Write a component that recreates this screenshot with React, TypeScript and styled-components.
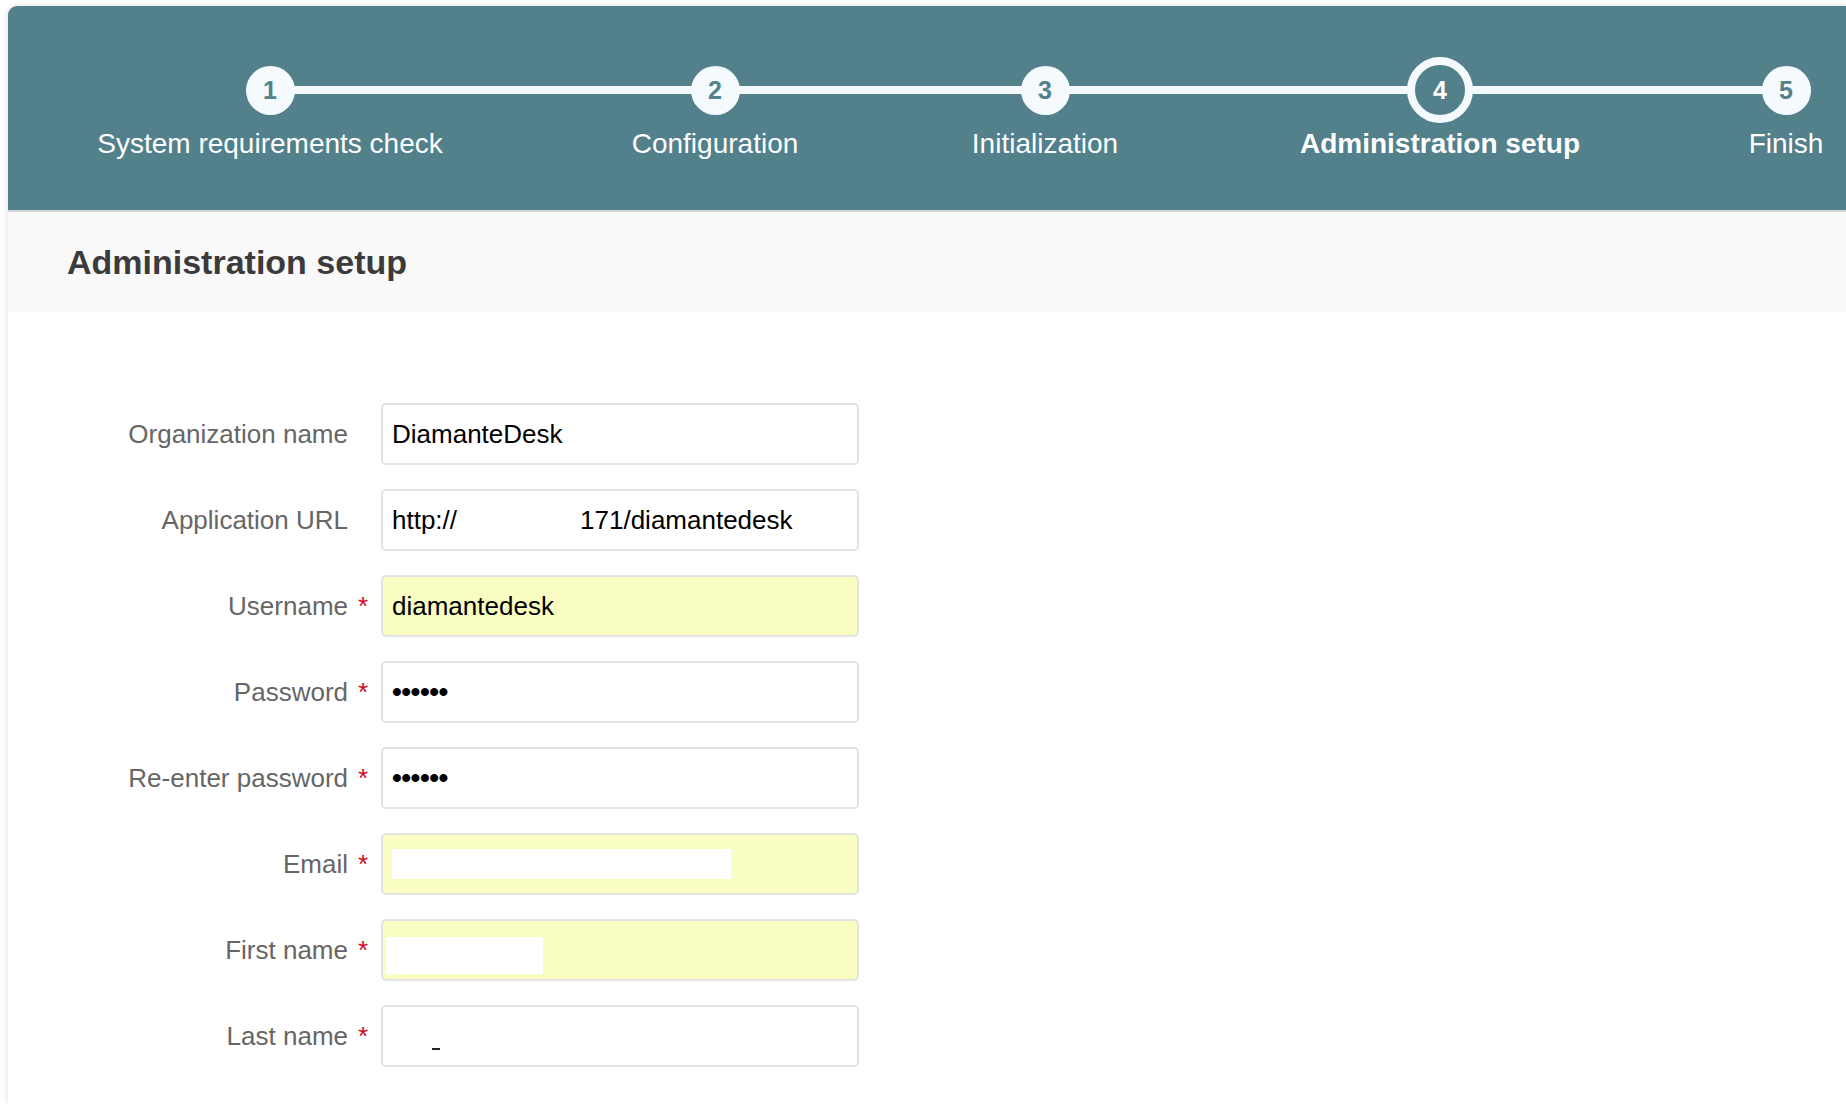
import styled, { createGlobalStyle } from 'styled-components';

const GlobalStyle = createGlobalStyle`
  html, body {
    margin: 0;
    padding: 0;
    background: #fff;
    overflow: hidden;
    font-family: "Liberation Sans", Arial, Helvetica, sans-serif;
  }
`;

const TEAL = '#52808b';
const LIGHT = '#f5faff';

const STEPS = [
  { n: 1, label: 'System requirements check', width: 524 },
  { n: 2, label: 'Configuration', width: 366 },
  { n: 3, label: 'Initialization', width: 294 },
  { n: 4, label: 'Administration setup', width: 496 },
  { n: 5, label: 'Finish', width: 196 },
];
const ACTIVE = 4;

const App = () => {
  return (
    <Page>
      <GlobalStyle />
      <Panel>
        <Header>
          <Steps $cols={STEPS.map((s) => `${s.width}px`).join(' ')}>
            {STEPS.map((s) => (
              <Step key={s.n}>
                <DotArea>
                  <Dot $active={s.n === ACTIVE}>{s.n}</Dot>
                </DotArea>
                <StepLabel $active={s.n === ACTIVE}>{s.label}</StepLabel>
              </Step>
            ))}
          </Steps>
        </Header>

        <TitleBar>
          <h1>Administration setup</h1>
        </TitleBar>

        <Form>
          <Label>Organization name</Label>
          <Star />
          <Field>DiamanteDesk</Field>

          <Label>Application URL</Label>
          <Star />
          <Field>
            <span>http://</span>
            <UrlRest>171/diamantedesk</UrlRest>
          </Field>

          <Label>Username</Label>
          <Star>*</Star>
          <Field $autofill>diamantedesk</Field>

          <Label>Password</Label>
          <Star>*</Star>
          <Field>
            <Dots>••••••</Dots>
          </Field>

          <Label>Re-enter password</Label>
          <Star>*</Star>
          <Field>
            <Dots>••••••</Dots>
          </Field>

          <Label>Email</Label>
          <Star>*</Star>
          <Field $autofill>
            <Mask $w={339} $h={30} />
          </Field>

          <Label>First name</Label>
          <Star>*</Star>
          <Field $autofill>
            <Mask $w={157} $h={37} $left={-6} $shift={10} />
          </Field>

          <Label>Last name</Label>
          <Star>*</Star>
          <Field>
            <Tick />
          </Field>
        </Form>
      </Panel>
    </Page>
  );
};

export default App;

/* ================= STYLES ================= */

const Page = styled.div`
  padding: 6px 0 0 8px;
  height: 100vh;
  box-sizing: border-box;
  overflow: hidden;
`;

const Panel = styled.div`
  background: #fff;
  border-top-left-radius: 9px;
  box-shadow: 0 0 7px rgba(0, 0, 0, 0.14);
  height: 100%;
  overflow: hidden;
`;

const Header = styled.div`
  background: ${TEAL};
  border-bottom: 2px solid #d6d6d6;
  padding: 51px 0 50px;
`;

const Steps = styled.div<{ $cols: string }>`
  position: relative;
  display: grid;
  grid-template-columns: ${(p) => p.$cols};

  &::before {
    content: '';
    position: absolute;
    left: 262px;
    width: 1516px;
    top: 29px;
    height: 8px;
    background: ${LIGHT};
  }
`;

const Step = styled.div`
  display: flex;
  flex-direction: column;
  align-items: center;
`;

const DotArea = styled.div`
  height: 66px;
  display: flex;
  align-items: center;
  justify-content: center;
`;

const Dot = styled.div<{ $active?: boolean }>`
  position: relative;
  z-index: 1;
  box-sizing: border-box;
  width: ${(p) => (p.$active ? 66 : 49)}px;
  height: ${(p) => (p.$active ? 66 : 49)}px;
  border-radius: 50%;
  border: ${(p) => (p.$active ? `8px solid ${LIGHT}` : 'none')};
  background: ${(p) => (p.$active ? TEAL : LIGHT)};
  color: ${(p) => (p.$active ? '#fff' : TEAL)};
  font-size: 25px;
  font-weight: 700;
  display: flex;
  align-items: center;
  justify-content: center;
`;

const StepLabel = styled.div<{ $active?: boolean }>`
  margin-top: 5px;
  font-size: 28px;
  line-height: 32px;
  color: #fff;
  font-weight: ${(p) => (p.$active ? 700 : 400)};
  white-space: nowrap;
`;

const TitleBar = styled.div`
  height: 100px;
  background: #f9f9f9;
  display: flex;
  align-items: center;
  padding-left: 59px;

  h1 {
    margin: 0;
    font-size: 34px;
    font-weight: 700;
    color: #3b3b3b;
  }
`;

const Form = styled.div`
  display: grid;
  grid-template-columns: 340px 33px 478px;
  grid-auto-rows: 62px;
  row-gap: 24px;
  padding-top: 91px;
  align-items: center;
`;

const Label = styled.div`
  text-align: right;
  font-size: 26px;
  line-height: 30px;
  color: #666;
  white-space: nowrap;
`;

const Star = styled.div`
  padding-left: 10px;
  font-size: 26px;
  line-height: 30px;
  color: #cc0a1e;
`;

const Field = styled.div<{ $autofill?: boolean }>`
  box-sizing: border-box;
  height: 62px;
  border: 2px solid #e3e3e3;
  border-radius: 5px;
  background: ${(p) => (p.$autofill ? '#fafdc2' : '#fff')};
  padding: 0 9px;
  display: flex;
  align-items: center;
  font-size: 26px;
  color: #000;
  white-space: nowrap;
  overflow: hidden;
`;

const UrlRest = styled.span`
  margin-left: 123px;
`;

const Dots = styled.span`
  font-size: 28px;
  font-weight: 700;
  letter-spacing: -0.5px;
`;

const Mask = styled.span<{ $w: number; $h: number; $left?: number; $shift?: number }>`
  display: block;
  width: ${(p) => p.$w}px;
  height: ${(p) => p.$h}px;
  margin-left: ${(p) => p.$left ?? 0}px;
  margin-top: ${(p) => p.$shift ?? 0}px;
  background: #fff;
`;

const Tick = styled.span`
  display: block;
  width: 8px;
  height: 2px;
  margin-left: 40px;
  margin-top: 26px;
  background: #222;
`;
